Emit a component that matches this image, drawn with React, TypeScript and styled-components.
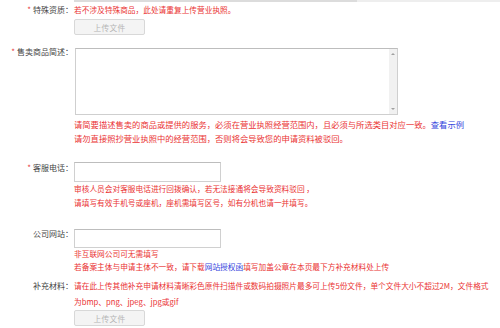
import React from 'react'
import styled, { createGlobalStyle } from 'styled-components'

const GlobalStyle = createGlobalStyle`
  body {
    margin: 0;
    background: #fff;
    font-family: "Noto Sans CJK SC", "Microsoft YaHei", sans-serif;
  }
`

const Page = styled.div`
  width: 500px;
  height: 328px;
  overflow: hidden;
`

const TopRule = styled.div`
  height: 2px;
  background: linear-gradient(to right, transparent 74px, #dcdcdc 74px, #dcdcdc 357px, #eeeeee 357px);
`

const Row = styled.div<{ $top: number }>`
  display: flex;
  margin-top: ${({ $top }) => $top}px;
`

const Label = styled.div<{ $pad: number }>`
  flex: none;
  width: 74px;
  padding-top: ${({ $pad }) => $pad}px;
  padding-right: 1px;
  box-sizing: border-box;
  text-align: right;
  font-size: 8px;
  line-height: 8px;
  color: #444;
  white-space: nowrap;
`

const Star = styled.span`
  color: #e63c3c;
  margin-right: 2px;
`

const Content = styled.div`
  flex: 1;
  min-width: 0;
`

const Hint = styled.div<{ $lh: number; $size?: number }>`
  color: #ea3333;
  font-size: ${({ $size }) => $size ?? 7.7}px;
  line-height: ${({ $lh }) => $lh}px;
  white-space: nowrap;
`

const Link = styled.span`
  color: #3344dd;
`

const UploadButton = styled.div<{ $top: number }>`
  margin-top: ${({ $top }) => $top}px;
  width: 71px;
  height: 16px;
  box-sizing: border-box;
  border: 1px solid #d8d8d8;
  border-radius: 2px;
  background: #f4f4f4;
  color: #b4b4b4;
  font-size: 7.7px;
  display: flex;
  align-items: center;
  justify-content: center;
  letter-spacing: 0.3px;
`

const TextBox = styled.div`
  width: 323px;
  height: 67px;
  box-sizing: border-box;
  border: 1px solid #cfcfcf;
  border-top-color: #bdbdbd;
  display: flex;
  margin-left: 1px;
`

const TextArea = styled.textarea`
  flex: 1;
  border: none;
  outline: none;
  resize: none;
  background: transparent;
`

const ScrollTrack = styled.div`
  flex: none;
  width: 8px;
  background: #f1f1f1;
  display: flex;
  flex-direction: column;
  justify-content: space-between;
  align-items: center;
  padding: 4px 0;
  box-sizing: border-box;
`

const Arrow = styled.div<{ $down?: boolean }>`
  width: 0;
  height: 0;
  border-left: 2px solid transparent;
  border-right: 2px solid transparent;
  ${({ $down }) => ($down ? 'border-top: 2px solid #a0a0a0;' : 'border-bottom: 2px solid #a0a0a0;')}
`

const Input = styled.input<{ $h: number }>`
  display: block;
  width: 147px;
  height: ${({ $h }) => $h}px;
  box-sizing: border-box;
  border: 1px solid #d0d0d0;
  border-top-color: #bdbdbd;
  outline: none;
  padding: 0;
`

export default function App() {
  return (
    <Page>
      <GlobalStyle />
      <TopRule />

      <Row $top={1}>
        <Label $pad={3}>
          <Star>*</Star>特殊资质：
        </Label>
        <Content>
          <Hint $lh={14}>若不涉及特殊商品，此处请重复上传营业执照。</Hint>
          <UploadButton $top={2}>上传文件</UploadButton>
        </Content>
      </Row>

      <Row $top={13}>
        <Label $pad={0}>
          <Star>*</Star>售卖商品简述：
        </Label>
        <Content>
          <TextBox>
            <TextArea />
            <ScrollTrack>
              <Arrow />
              <Arrow $down />
            </ScrollTrack>
          </TextBox>
          <div style={{ height: 3 }} />
          <Hint $lh={13.5} $size={8.3}>
            请简要描述售卖的商品或提供的服务，必须在营业执照经营范围内，且必须与所选类目对应一致。<Link>查看示例</Link>
          </Hint>
          <Hint $lh={13.5} $size={8.3}>请勿直接照抄营业执照中的经营范围，否则将会导致您的申请资料被驳回。</Hint>
        </Content>
      </Row>

      <Row $top={17}>
        <Label $pad={2}>
          <Star>*</Star>客服电话：
        </Label>
        <Content>
          <Input $h={20} />
          <Hint $lh={13.5}>审核人员会对客服电话进行回拨确认，若无法接通将会导致资料驳回 ，</Hint>
          <Hint $lh={13.5}>请填写有效手机号或座机，座机需填写区号，如有分机也请一并填写。</Hint>
        </Content>
      </Row>

      <Row $top={20}>
        <Label $pad={1}>公司网站：</Label>
        <Content>
          <Input $h={19} />
          <Hint $lh={12.5}>非互联网公司可无需填写</Hint>
          <Hint $lh={12.5}>
            若备案主体与申请主体不一致，请下载<Link>网站授权函</Link>填写加盖公章在本页最下方补充材料处上传
          </Hint>
        </Content>
      </Row>

      <Row $top={5}>
        <Label $pad={4}>补充材料：</Label>
        <Content>
          <Hint $lh={16}>
            请在此上传其他补充申请材料清晰彩色原件扫描件或数码拍摄照片最多可上传5份文件，单个文件大小不超过2M，文件格式
          </Hint>
          <Hint $lh={16}>为bmp、png、jpeg、jpg或gif</Hint>
          <UploadButton $top={0}>上传文件</UploadButton>
        </Content>
      </Row>
    </Page>
  )
}
